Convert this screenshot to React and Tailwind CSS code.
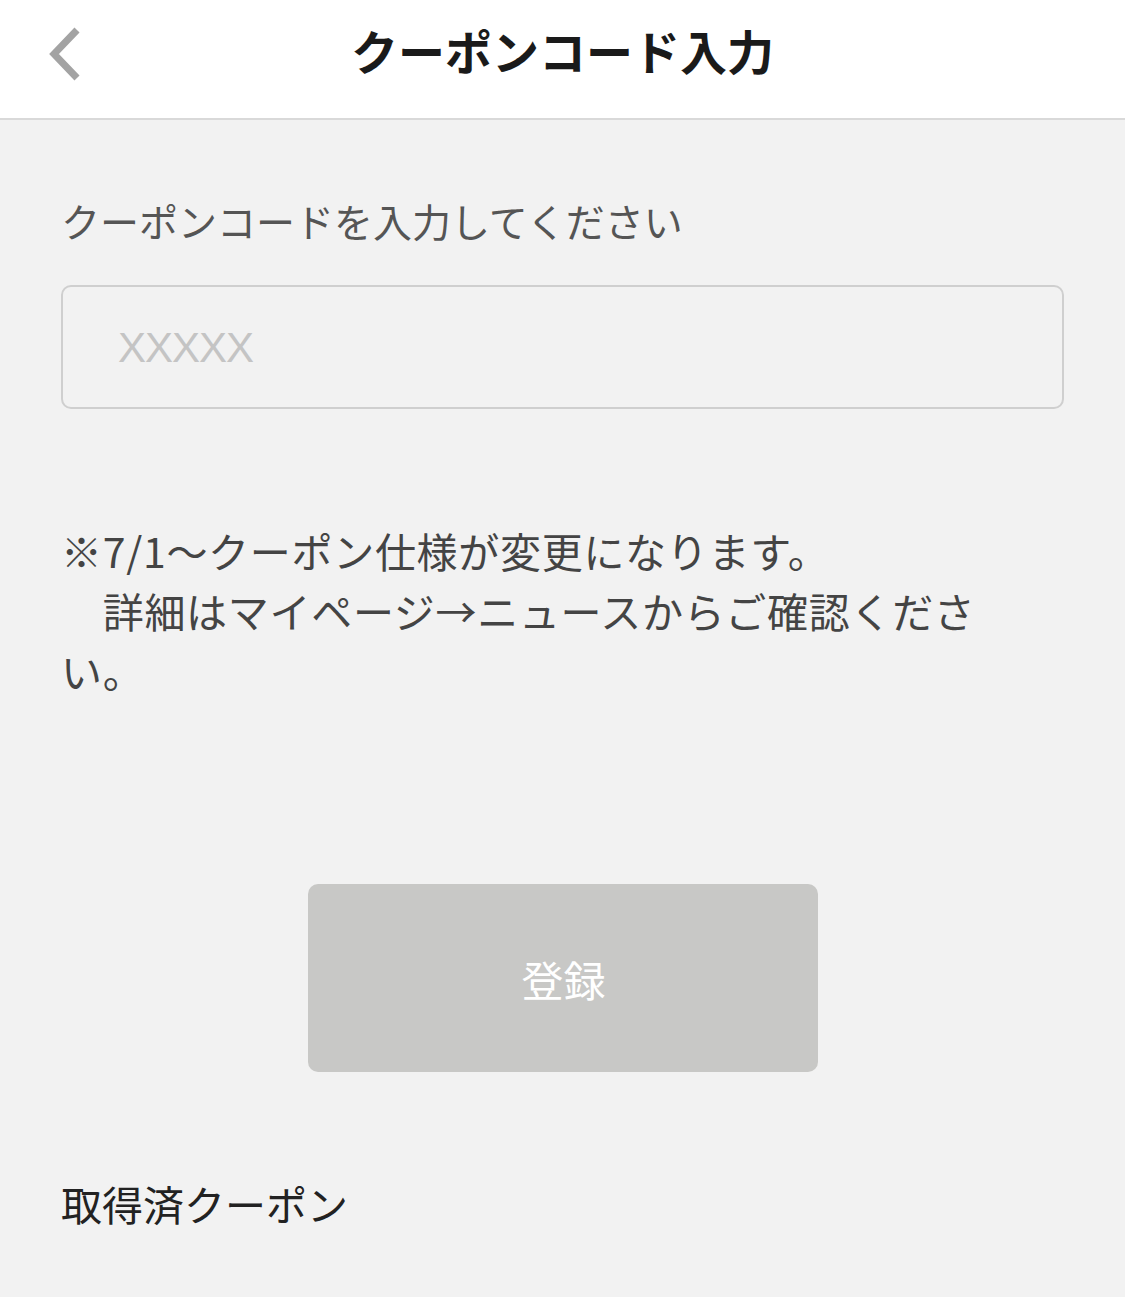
import React from "react";

const jp = { fontFamily: '"Noto Sans CJK JP", "Noto Sans", sans-serif' };

function BackIcon() {
  return (
    <svg width="40" height="56" viewBox="0 0 40 56" className="block">
      <polyline
        points="33,4 10,28 33,52"
        fill="none"
        stroke="#a3a3a3"
        strokeWidth="7"
        strokeLinecap="butt"
        strokeLinejoin="miter"
      />
    </svg>
  );
}

export default function App() {
  return (
    <div className="w-[1125px] min-h-[1297px] bg-[#f2f2f2]" style={jp}>
      {/* header */}
      <header className="h-[120px] bg-white border-b-2 border-[#d9d9d9] grid grid-cols-[1fr_auto_1fr] items-start pt-[25px]">
        <div className="pl-[44px] pt-[1px]">
          <BackIcon />
        </div>
        <h1 className="text-[47px] leading-[50px] font-bold text-[#1a1a1a]">
          クーポンコード入力
        </h1>
        <div />
      </header>

      <main className="px-[61px]">
        <p className="pt-[76px] text-[39px] leading-[48px] text-[#555]">
          クーポンコードを入力してください
        </p>

        <div className="mt-[41px] h-[124px] rounded-[10px] border-2 border-[#cfcfcf] flex items-center pl-[55px]">
          <span
            className="text-[42px] text-[#c4c4c4] tracking-[-1px]"
            style={{ fontFamily: '"Liberation Sans", Arial, sans-serif' }}
          >
            XXXXX
          </span>
        </div>

        <p className="mt-[111px] text-[41px] leading-[60px] text-[#444] tracking-[0.7px] whitespace-pre">
          {"※7/1〜クーポン仕様が変更になります。"}
          <br />
          {"\u3000詳細はマイページ→ニュースからご確認くださ"}
          <br />
          {"い。"}
        </p>

        <div className="mt-[184px] flex justify-center">
          <button className="w-[510px] h-[188px] rounded-[10px] bg-[#c8c8c6] text-white text-[42px] pl-[2px]">
            登録
          </button>
        </div>

        <p className="mt-[107px] text-[41px] leading-[48px] text-[#222]">
          取得済クーポン
        </p>
      </main>
    </div>
  );
}
